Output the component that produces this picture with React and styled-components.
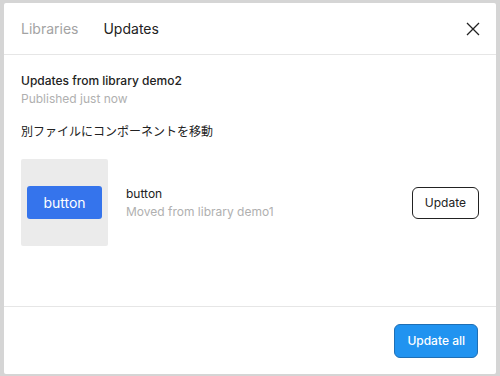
import React from 'react';
import styled, { createGlobalStyle } from 'styled-components';

const GlobalStyle = createGlobalStyle`
  body {
    margin: 0;
    background: #d5d5d5;
    font-family: Inter, "Noto Sans CJK JP", sans-serif;
  }
`;

const Dialog = styled.div`
  box-sizing: border-box;
  width: 492px;
  height: 371px;
  margin: 3px 0 0 4px;
  background: #fff;
  border-radius: 2px;
  display: flex;
  flex-direction: column;
`;

const Header = styled.div`
  height: 51px;
  border-bottom: 1px solid #e6e6e6;
  display: flex;
  align-items: center;
  padding: 0 15px 0 17px;
  gap: 25px;
`;

const Tab = styled.div`
  font-size: 14px;
  color: ${(p) => (p.active ? '#222' : '#a3a3a3')};
`;

const Close = styled.button`
  margin-left: auto;
  border: none;
  background: none;
  padding: 0;
  width: 16px;
  height: 16px;
  display: flex;
  align-items: center;
  justify-content: center;
`;

const Body = styled.div`
  flex: 1;
  padding: 17px 17px 0;
  border-bottom: 1px solid #e6e6e6;
`;

const Title = styled.div`
  font-size: 12px;
  font-weight: 500;
  color: #222;
  line-height: 18px;
`;

const Sub = styled.div`
  font-size: 12px;
  color: #b0b0b0;
  line-height: 18px;
`;

const Note = styled.div`
  margin-top: 15px;
  font-size: 12px;
  color: #222;
  line-height: 18px;
`;

const Row = styled.div`
  margin-top: 18px;
  display: flex;
  align-items: center;
`;

const Thumb = styled.div`
  width: 87px;
  height: 87px;
  background: #ebebeb;
  border-radius: 2px;
  display: flex;
  align-items: center;
  justify-content: center;
`;

const Sample = styled.div`
  width: 75px;
  height: 33px;
  background: #3574ec;
  border-radius: 3px;
  color: #fff;
  font-size: 14px;
  display: flex;
  align-items: center;
  justify-content: center;
`;

const Info = styled.div`
  margin-left: 18px;
  flex: 1;
`;

const Name = styled.div`
  font-size: 12px;
  color: #222;
  line-height: 18px;
`;

const Moved = styled.div`
  font-size: 12px;
  color: #b0b0b0;
  line-height: 18px;
`;

const Button = styled.button`
  font-family: inherit;
  font-size: 12px;
  border-radius: 6px;
  height: ${(p) => (p.primary ? '34px' : '32px')};
  padding: 0 ${(p) => (p.primary ? '12px' : '12px')};
  background: ${(p) => (p.primary ? '#2193f0' : '#fff')};
  color: ${(p) => (p.primary ? '#fff' : '#222')};
  border: 1px solid ${(p) => (p.primary ? '#1f6fb5' : '#222')};
  font-weight: ${(p) => (p.primary ? 500 : 400)};
`;

const Footer = styled.div`
  height: 67px;
  display: flex;
  align-items: center;
  justify-content: flex-end;
  padding: 0 18px 0 0;
`;

export default function App() {
  return (
    <>
      <GlobalStyle />
      <Dialog>
        <Header>
          <Tab>Libraries</Tab>
          <Tab active>Updates</Tab>
          <Close aria-label="close">
            <svg width="14" height="14" viewBox="0 0 14 14">
              <path d="M1 1L13 13M13 1L1 13" stroke="#222" strokeWidth="1.3" />
            </svg>
          </Close>
        </Header>
        <Body>
          <Title>Updates from library demo2</Title>
          <Sub>Published just now</Sub>
          <Note>別ファイルにコンポーネントを移動</Note>
          <Row>
            <Thumb>
              <Sample>button</Sample>
            </Thumb>
            <Info>
              <Name>button</Name>
              <Moved>Moved from library demo1</Moved>
            </Info>
            <Button>Update</Button>
          </Row>
        </Body>
        <Footer>
          <Button primary>Update all</Button>
        </Footer>
      </Dialog>
    </>
  );
}
